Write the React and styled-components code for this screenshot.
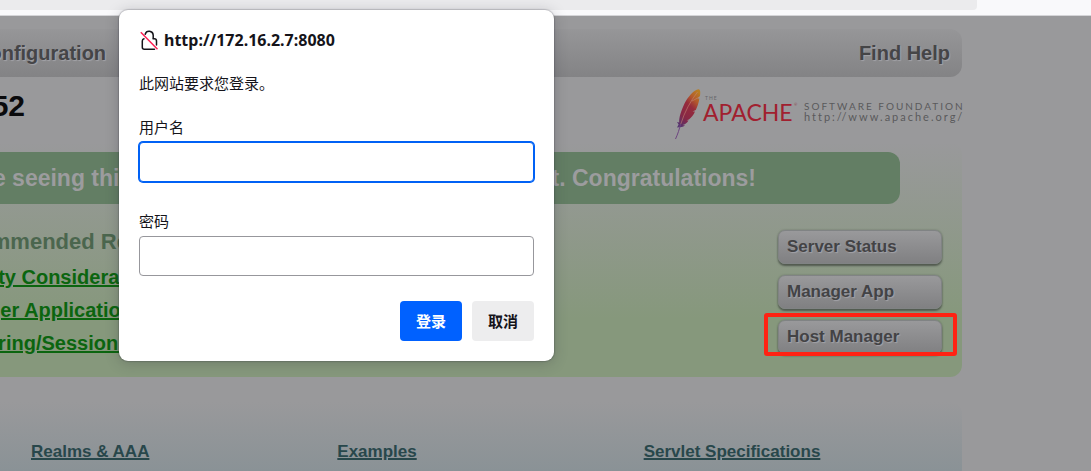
import React from "react";
import styled, { createGlobalStyle } from "styled-components";

const resources = [
  "Security Considerations How-To",
  "Manager Application How-To",
  "Clustering/Session Replication How-To",
];

const managers = [
  { id: 1, text: "Server Status" },
  { id: 2, text: "Manager App" },
  { id: 3, text: "Host Manager", marked: true },
];

const docs = ["Realms & AAA", "Examples", "Servlet Specifications"];

const ApacheLogo = () => {
  return (
    <svg width="290" height="54" viewBox="0 0 290 54" role="img">
      <title>The Apache Software Foundation</title>
      <defs>
        <linearGradient id="feather" x1="0.8" y1="0" x2="0.2" y2="1">
          <stop offset="0" stopColor="#b97d22" />
          <stop offset="0.22" stopColor="#b3592b" />
          <stop offset="0.42" stopColor="#962b3c" />
          <stop offset="0.75" stopColor="#862746" />
          <stop offset="1" stopColor="#55346f" />
        </linearGradient>
      </defs>
      <path
        d="M23.5 1.3C25.3 1.5 25.6 4 25 8L22.5 10.5L24.4 10.5C23.8 14.5 22.5 18.5 20.8 22L17.5 23.5L20 23.6C18.5 27 16.5 29.5 14 31.5L11.5 32.2L13.5 32.5C12 35 10 36.5 7.5 37L10 37.6C8 39.2 6 39.4 4 39.2L2 39.5L3.6 36.5L2 34L4.2 34.5C3.8 29 6.5 22 9.5 15.5C12.5 9.5 19 1.5 23.5 1.3Z"
        fill="url(#feather)"
      />
      <path
        d="M5.5 36C4.5 41 2.8 46 0.5 51"
        fill="none"
        stroke="#6d4480"
        strokeWidth="1"
      />
      <path
        d="M22.5 4C15.5 13 9.5 24 5.8 36M24.5 9L17 13"
        fill="none"
        stroke="#c28474"
        strokeWidth="0.6"
      />
      <LogoText x="30" y="12" fontSize="5" letterSpacing="1" fill="#66666a">
        THE
      </LogoText>
      <LogoName x="28" y="33">
        APACHE
      </LogoName>
      <LogoText x="119" y="18" fontSize="4" fill="#8c3d48">
        ®
      </LogoText>
      <LogoTracked x="129" y="22" fontSize="10">
        SOFTWARE FOUNDATION
      </LogoTracked>
      <LogoTracked x="129" y="33" fontSize="11">
        http://www.apache.org/
      </LogoTracked>
    </svg>
  );
};

const LockIcon = () => {
  return (
    <svg width="20" height="22" viewBox="0 0 20 22" fill="none" aria-hidden="true">
      <path
        d="M6.2 5.2A4.1 4.1 0 0 1 14.2 6V9.4M5 9.8Q3.3 10.2 3.3 12V18.3Q3.3 20.3 5.3 20.3H15.5M14 9.8H15.3Q17.5 9.8 17.5 12V16"
        stroke="#15141a"
        strokeWidth="1.5"
        strokeLinecap="round"
      />
      <path d="M1.8 3.2L18.5 20.2" stroke="#ff1f53" strokeWidth="1.5" />
    </svg>
  );
};

const LoginDialog = () => {
  return (
    <Dialog role="dialog" aria-labelledby="login-title">
      <DialogTitle id="login-title">
        <LockIcon />
        http://172.16.2.7:8080
      </DialogTitle>
      <Message>此网站要求您登录。</Message>
      <Field $gap={24}>
        <label htmlFor="username">用户名</label>
        <TextInput id="username" type="text" $active />
      </Field>
      <Field $gap={29}>
        <label htmlFor="password">密码</label>
        <TextInput id="password" type="password" />
      </Field>
      <Actions>
        <DialogButton type="button" $primary>
          登录
        </DialogButton>
        <DialogButton type="button">取消</DialogButton>
      </Actions>
    </Dialog>
  );
};

const App = () => {
  return (
    <Page>
      <GlobalStyle />
      <BrowserBar>
        <AddressBar />
      </BrowserBar>
      <Wrapper>
        <Nav>
          <a href="#config">Configuration</a>
          <a href="#help">Find Help</a>
        </Nav>
        <Heading>
          <h1>Apache Tomcat/9.0.52</h1>
          <ApacheLogo />
        </Heading>
        <Upper>
          <Banner>
            <span>If you're seeing this,</span>
            <span>
              you've successfully installed Tomcat. Congratulations!
            </span>
          </Banner>
          <Columns>
            <div>
              <h3>Recommended Reading:</h3>
              {resources.map((text) => (
                <ReadingLink href="#docs" key={text}>
                  {text}
                </ReadingLink>
              ))}
            </div>
            <Managers>
              {managers.map(({ id, text, marked }) => (
                <Slot key={id}>
                  <ManagerButton type="button">{text}</ManagerButton>
                  {marked && <Marker />}
                </Slot>
              ))}
            </Managers>
          </Columns>
        </Upper>
        <Middle>
          {docs.map((text) => (
            <div key={text}>
              <a href="#docs">{text}</a>
            </div>
          ))}
        </Middle>
      </Wrapper>
      <LoginDialog />
    </Page>
  );
};

const GlobalStyle = createGlobalStyle`
  * {
    box-sizing: border-box;
  }
  body {
    margin: 0;
    background: #99999b;
    font-family: "Liberation Sans", Arial, sans-serif;
  }
  h1, h2, h3, p {
    margin: 0;
  }
`;

const Page = styled.div`
  position: relative;
  display: flex;
  flex-direction: column;
  min-height: 100vh;
  overflow: hidden;
`;

const BrowserBar = styled.div`
  height: 16px;
  padding-right: 114px;
  background: #f9f9fb;
  border-bottom: 1px solid #d4d4d7;
`;

const AddressBar = styled.div`
  height: 10px;
  background: #ebebed;
  border-radius: 0 0 4px 0;
`;

/* the page is scrolled sideways, its left part is out of view */
const Wrapper = styled.main`
  flex: 1;
  display: flex;
  flex-direction: column;
  margin: 13px 129px 0 -300px;
`;

const Nav = styled.nav`
  display: flex;
  justify-content: space-between;
  height: 48px;
  padding: 0 12px 0 275px;
  border-radius: 12px;
  background: linear-gradient(#969698, #838385);
  line-height: 48px;
  a {
    color: #454547;
    font-size: 20px;
    font-weight: bold;
    text-decoration: none;
    text-shadow: 1px 1px 1px #a3a3a8;
  }
`;

const Heading = styled.header`
  display: flex;
  justify-content: space-between;
  height: 65px;
  padding-top: 11px;
  h1 {
    width: 325px;
    color: #0a0a0c;
    font-size: 30px;
    line-height: 36px;
    text-align: right;
    white-space: nowrap;
  }
  svg {
    flex: none;
    margin-right: -3px;
    overflow: visible;
  }
`;

const Upper = styled.section`
  padding-top: 10px;
  height: 235px;
  border-radius: 12px;
  background: linear-gradient(#99999b, #86987c 75%);
`;

const Banner = styled.h2`
  display: flex;
  align-items: center;
  justify-content: flex-end;
  gap: 18px;
  height: 52px;
  margin-right: 62px;
  padding-right: 144px;
  border-radius: 12px;
  background: #637e64;
  color: #9c9c9e;
  font-size: 23px;
  white-space: nowrap;
`;

const Columns = styled.div`
  display: flex;
  justify-content: space-between;
  padding: 24px 20px 0 237px;
  h3 {
    color: #4b664e;
    font-size: 22px;
    line-height: 28px;
    margin-bottom: 5px;
  }
`;

const ReadingLink = styled.a`
  display: block;
  color: #0b650f;
  font-size: 20px;
  font-weight: bold;
  line-height: 33px;
  text-decoration-thickness: 2px;
`;

const Managers = styled.div`
  display: grid;
  gap: 11px;
  align-content: start;
  width: 164px;
  padding-top: 2px;
`;

const Slot = styled.div`
  position: relative;
  height: 34px;
`;

const ManagerButton = styled.button`
  width: 100%;
  height: 34px;
  padding: 0 0 0 8px;
  border: 1px solid #808384;
  border-radius: 7px;
  background: linear-gradient(#99999b, #808082);
  box-shadow: 0 2px 2px #525a50, 0 0 2px #687065;
  color: #434345;
  font: bold 17px "Liberation Sans", Arial, sans-serif;
  text-align: left;
  text-shadow: 1px 1px 1px #a3a3a8;
`;

const Marker = styled.div`
  position: absolute;
  inset: -7px -15px -2px -14px;
  border: 4px solid #ff2213;
  border-radius: 3px;
`;

const Middle = styled.section`
  flex: 1;
  display: grid;
  grid-template-columns: repeat(3, 1fr);
  margin-top: 25px;
  padding: 40px 12px 0 331px;
  border-radius: 12px 12px 0 0;
  background: linear-gradient(#99999b, #8a9296);
  a {
    color: #28474b;
    font-size: 17px;
    font-weight: bold;
    line-height: 20px;
    text-decoration-thickness: 2px;
  }
`;

const Dialog = styled.form`
  position: absolute;
  top: 10px;
  left: 119px;
  width: 435px;
  padding: 20px;
  border-radius: 9px;
  background: #fff;
  box-shadow: 0 0 1px 1px rgba(40, 40, 50, 0.2),
    0 2px 14px rgba(40, 40, 50, 0.25);
  color: #15141a;
  font: 15px "Noto Sans", "Noto Sans CJK SC", sans-serif;
  line-height: 20px;
`;

const DialogTitle = styled.h2`
  display: flex;
  align-items: center;
  gap: 5px;
  height: 20px;
  font-size: 16px;
  font-weight: bold;
`;

const Message = styled.p`
  margin-top: 23px;
`;

const Field = styled.div`
  display: grid;
  gap: 5px;
  margin-top: ${(props) => props.$gap}px;
`;

const TextInput = styled.input`
  width: 100%;
  height: 40px;
  padding: 0 10px;
  border: 1px solid ${(props) => (props.$active ? "#0061f5" : "#97979c")};
  border-radius: 4px;
  box-shadow: ${(props) => (props.$active ? "0 0 0 1px #0061f5" : "none")};
  background: #fff;
  font: inherit;
  outline: none;
`;

const Actions = styled.div`
  display: flex;
  justify-content: flex-end;
  gap: 10px;
  margin-top: 25px;
`;

const DialogButton = styled.button`
  width: 62px;
  height: 40px;
  padding: 0;
  border: none;
  border-radius: 4px;
  background: ${(props) => (props.$primary ? "#0061ff" : "#ededee")};
  color: ${(props) => (props.$primary ? "#fff" : "#15141a")};
  font: inherit;
  font-weight: bold;
`;

const LogoText = styled.text`
  font-family: Lato, sans-serif;
`;

const LogoName = styled.text`
  font-family: Lato, sans-serif;
  font-size: 23px;
  fill: #a1202f;
`;

const LogoTracked = styled.text`
  font-family: Lato, sans-serif;
  letter-spacing: 2px;
  fill: #59595c;
`;

export default App;
